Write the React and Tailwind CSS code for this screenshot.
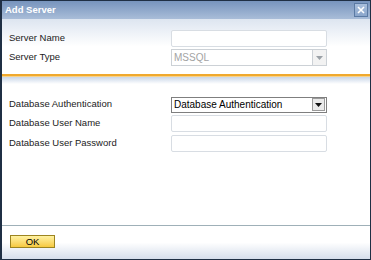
import React from 'react';

const font = { fontFamily: '"Liberation Sans", Arial, sans-serif' };

function Field({ label, children, tall }) {
  return (
    <div className={tall ? 'flex items-center h-[20px]' : 'flex items-center h-[19px]'}>
      <span className="w-[162px] text-[9.5px] text-[#222]">{label}</span>
      {children}
    </div>
  );
}

function TextBox() {
  return <div className="w-[156px] h-[17px] bg-white border border-[#d8dde3] rounded-[2px]" />;
}

function Arrow({ dark }) {
  return (
    <svg width="7" height="4" viewBox="0 0 7 4">
      <path d="M0 0h7L3.5 4z" fill={dark ? '#111' : '#9aa0a6'} />
    </svg>
  );
}

export default function App() {
  return (
    <div className="w-[371px] h-[260px] border border-[#1f2f44] border-l-2 flex flex-col bg-white overflow-hidden" style={font}>
      {/* title bar */}
      <div className="h-[18px] flex items-center justify-between pl-[3px] pr-[2px] bg-gradient-to-b from-[#7794bd] to-[#a9bdd8]">
        <span className="text-[9.5px] font-bold text-white">Add Server</span>
        <div className="w-[14px] h-[14px] border border-[#5b7aa3] bg-gradient-to-b from-[#a9bfdc] to-[#8ba6cb] flex items-center justify-center">
          <svg width="8" height="8" viewBox="0 0 8 8">
            <path d="M1 1l6 6M7 1L1 7" stroke="#fff" strokeWidth="1.6" />
          </svg>
        </div>
      </div>

      {/* server section */}
      <div className="bg-gradient-to-b from-[#dde5f0] via-white to-white pt-[10px] pl-[7px] pb-[7px] flex flex-col">
        <Field label="Server Name">
          <TextBox />
        </Field>
        <Field label="Server Type">
          <div className="w-[156px] h-[17px] bg-white border border-[#ccd1d6] flex items-center justify-between">
            <span className="pl-[2px] text-[10px] text-[#a3a3a3]">MSSQL</span>
            <div className="w-[14px] h-full border-l border-[#ccd1d6] bg-[#f2f2f2] flex items-center justify-center">
              <Arrow />
            </div>
          </div>
        </Field>
      </div>

      {/* orange separator */}
      <div className="h-[2px] bg-[#f0a92e]" />
      <div className="h-[1px] bg-[#f7d28a]" />
      <div className="h-[7px] bg-gradient-to-b from-[#c9d6e8] to-white" />

      {/* auth section */}
      <div className="pt-[11px] pl-[7px] flex flex-col flex-1">
        <Field label="Database Authentication">
          <div className="w-[156px] h-[16px] bg-white border border-[#7f7f7f] flex items-center justify-between">
            <span className="pl-[2px] text-[10px] text-black">Database Authentication</span>
            <div className="w-[13px] h-[13px] mr-[1px] border border-[#9a9a9a] bg-[#eaeaea] flex items-center justify-center">
              <Arrow dark />
            </div>
          </div>
        </Field>
        <Field label="Database User Name">
          <TextBox />
        </Field>
        <Field label="Database User Password" tall>
          <TextBox />
        </Field>
      </div>

      {/* footer */}
      <div className="h-[1px] bg-[#9fb0b8]" />
      <div className="h-[33px] pl-[8px] pt-[9px] bg-gradient-to-b from-white via-white to-[#d6deeb]">
        <button className="w-[45px] h-[13px] border border-[#9c8421] bg-gradient-to-b from-[#fff2a0] to-[#f6c93c] text-[9.5px] text-black leading-none flex items-center justify-center">
          OK
        </button>
      </div>
    </div>
  );
}
